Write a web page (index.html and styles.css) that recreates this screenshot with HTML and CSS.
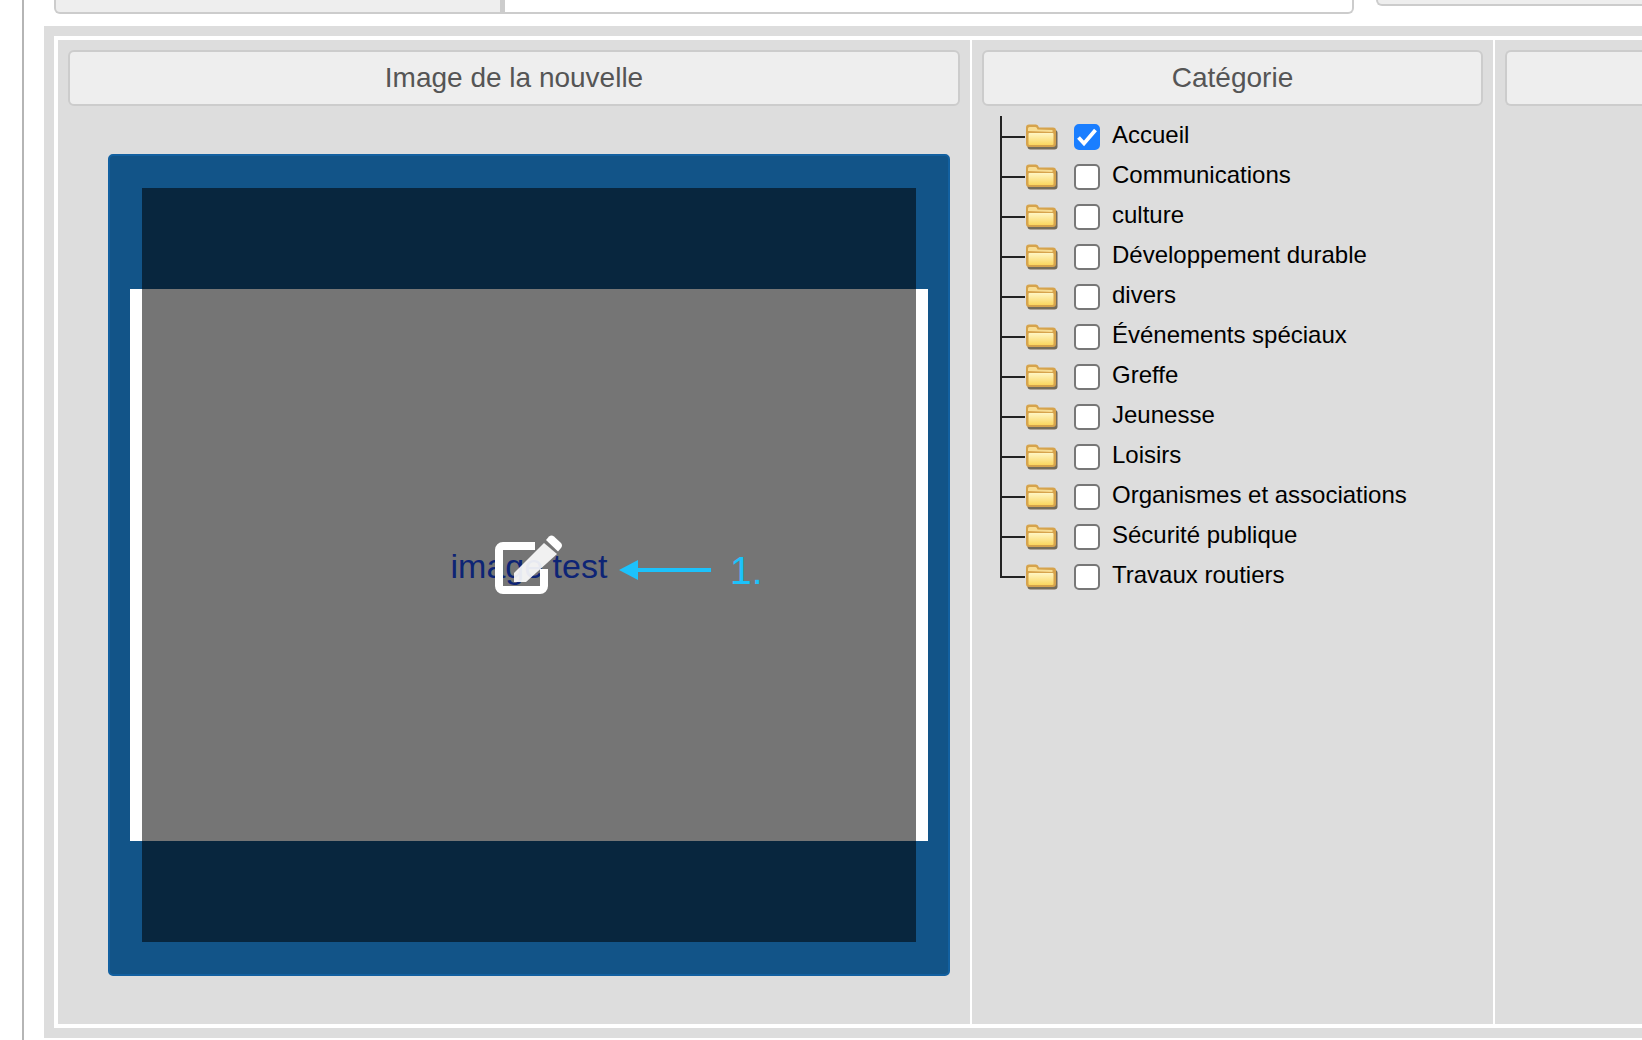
FILE: index.html
```html
<!DOCTYPE html>
<html lang="fr">
<head>
<meta charset="utf-8">
<title>Image de la nouvelle</title>
<link rel="stylesheet" href="styles.css">
</head>
<body>
<svg class="defs" width="0" height="0" aria-hidden="true">
  <defs>
    <linearGradient id="folderFill" x1="0" y1="0" x2="0" y2="1">
      <stop offset="0" stop-color="#fff6c4"/>
      <stop offset="1" stop-color="#fbd65e"/>
    </linearGradient>
    <filter id="folderBlur" x="-10%" y="-10%" width="120%" height="120%">
      <feGaussianBlur stdDeviation=".7"/>
    </filter>
    <symbol id="folder" viewBox="0 0 33 26">
      <rect x="2.500" y="6" width="30" height="19.500" rx="3" fill="#4a3a20" opacity=".7" filter="url(#folderBlur)"/>
      <path d="M1 20V3.500q0-3 3-3h7q2 0 3 3h14q3 0 3 3V20q0 3-3 3H4q-3 0-3-3z" fill="#d6a34c"/>
      <path d="M3 7V4.500q0-1.500 1.500-1.500h6q1.500 0 2 2.500l15 .5v2z" fill="#f7dd94"/>
      <rect x="3.500" y="9" width="25" height="12" rx="1" fill="url(#folderFill)"/>
    </symbol>
  </defs>
</svg>
<div class="page">
  <div class="top">
    <div class="tab"></div>
    <div class="tab-body"></div>
    <div class="tab-side"></div>
  </div>
  <div class="panel">
    <div class="inner">
      <section class="col col-image">
        <h2 class="head">Image de la nouvelle</h2>
        <div class="image-box">
          <div class="picture"><span class="picture-text">image test</span></div>
          <div class="overlay"></div>
          <svg class="edit-icon" width="72" height="64" viewBox="0 0 72 64" aria-hidden="true">
            <path d="M42 13H10a4 4 0 0 0-4 4v36a4 4 0 0 0 4 4h37a4 4 0 0 0 4-4V36" fill="none" stroke="#fff" stroke-width="8"/>
            <path d="M21 40L51 10l13 11-31 28H21z" fill="#fff" fill-opacity=".9"/>
            <path d="M53 7l3-3.500q2.500-2 5 0l7 6.500q2 2.500 0 5l-3 3.500z" fill="#fff"/>
          </svg>
          <div class="note">
            <svg class="arrow" width="92" height="20" viewBox="0 0 92 20" aria-hidden="true">
              <path d="M0 10L19 0v8h73v4H19v8z" fill="#1cc2fb"/>
            </svg>
            <span class="note-text">1.</span>
          </div>
        </div>
      </section>
      <section class="col col-cat">
        <h2 class="head">Catégorie</h2>
        <ul class="tree">
          <li class="row"><span class="branch"></span><svg class="folder"><use href="#folder"/></svg><span class="check check-on"><svg width="26" height="26" viewBox="0 0 26 26" aria-hidden="true"><path d="M4.500 13.500l5.500 6L21.500 6" fill="none" stroke="#fff" stroke-width="3.800"/></svg></span><span class="label">Accueil</span></li>
          <li class="row"><span class="branch"></span><svg class="folder"><use href="#folder"/></svg><span class="check"></span><span class="label">Communications</span></li>
          <li class="row"><span class="branch"></span><svg class="folder"><use href="#folder"/></svg><span class="check"></span><span class="label">culture</span></li>
          <li class="row"><span class="branch"></span><svg class="folder"><use href="#folder"/></svg><span class="check"></span><span class="label">Développement durable</span></li>
          <li class="row"><span class="branch"></span><svg class="folder"><use href="#folder"/></svg><span class="check"></span><span class="label">divers</span></li>
          <li class="row"><span class="branch"></span><svg class="folder"><use href="#folder"/></svg><span class="check"></span><span class="label">Événements spéciaux</span></li>
          <li class="row"><span class="branch"></span><svg class="folder"><use href="#folder"/></svg><span class="check"></span><span class="label">Greffe</span></li>
          <li class="row"><span class="branch"></span><svg class="folder"><use href="#folder"/></svg><span class="check"></span><span class="label">Jeunesse</span></li>
          <li class="row"><span class="branch"></span><svg class="folder"><use href="#folder"/></svg><span class="check"></span><span class="label">Loisirs</span></li>
          <li class="row"><span class="branch"></span><svg class="folder"><use href="#folder"/></svg><span class="check"></span><span class="label">Organismes et associations</span></li>
          <li class="row"><span class="branch"></span><svg class="folder"><use href="#folder"/></svg><span class="check"></span><span class="label">Sécurité publique</span></li>
          <li class="row row-last"><span class="branch"></span><svg class="folder"><use href="#folder"/></svg><span class="check"></span><span class="label">Travaux routiers</span></li>
        </ul>
      </section>
      <section class="col col-rest">
        <h2 class="head"></h2>
      </section>
    </div>
  </div>
</div>
</body>
</html>
```
FILE: styles.css
```css
* { box-sizing: border-box; }
html, body { margin: 0; padding: 0; }
body {
  width: 1642px;
  height: 1040px;
  overflow: hidden;
  background: #fff;
  font-family: "Liberation Sans", Arial, sans-serif;
}
.defs { position: absolute; }
.page {
  width: 1620px;
  height: 1040px;
  margin-left: 22px;
  padding-left: 20px;
  border-left: 2px solid #b5b5b5;
}
.top {
  display: flex;
  height: 26px;
  margin-left: 10px;
  align-items: flex-start;
}
.tab {
  width: 448px;
  height: 14px;
  background: #eee;
  border: 2px solid #ccc;
  border-top: 0;
  border-radius: 0 0 0 6px;
}
.tab-body {
  width: 852px;
  height: 14px;
  background: #fff;
  border: 2px solid #ccc;
  border-top: 0;
  border-left-width: 3px;
  border-radius: 0 0 6px 0;
}
.tab-side {
  flex: 1;
  height: 6px;
  margin-left: 22px;
  background: #eee;
  border: 2px solid #ccc;
  border-top: 0;
  border-right: 0;
  border-radius: 0 0 0 6px;
}
.panel {
  height: 1012px;
  padding: 10px 0 10px 10px;
  background: #ddd;
}
.inner {
  display: flex;
  height: 100%;
  border: solid #fff;
  border-width: 4px 0 4px 4px;
  background: #ddd;
}
.col {
  flex: none;
  padding: 10px 10px 0;
  border-right: 2px solid #fff;
}
.col-image { width: 914px; }
.col-cat { width: 523px; }
.col-rest { flex: 1; border-right: 0; padding-right: 0; }
.head {
  height: 56px;
  margin: 0;
  background: #eee;
  border: 2px solid #ccc;
  border-radius: 6px;
  color: #555;
  font-size: 28px;
  font-weight: 400;
  line-height: 52px;
  text-align: center;
}
.col-image .head { width: 892px; }
.col-cat .head { width: 501px; }
.col-rest .head { margin-right: -10px; border-right: 0; border-radius: 6px 0 0 6px; }
.image-box {
  position: relative;
  display: flex;
  align-items: center;
  justify-content: center;
  width: 842px;
  height: 822px;
  margin: 48px 0 0 40px;
  background: #125488;
  border: 2px solid #1260a0;
  border-radius: 5px;
}
.picture {
  display: flex;
  align-items: center;
  justify-content: center;
  width: 798px;
  height: 552px;
  background: #fff;
}
.picture-text {
  padding-top: 2px;
  color: #1e50ff;
  font-size: 34px;
}
.overlay {
  position: absolute;
  left: 32px;
  top: 32px;
  width: 774px;
  height: 754px;
  background: rgba(0, 0, 0, .54);
}
.edit-icon {
  position: absolute;
  left: 383px;
  top: 377px;
}
.note {
  position: absolute;
  left: 509px;
  top: 393px;
  display: flex;
  align-items: center;
  gap: 19px;
}
.arrow { display: block; }
.note-text {
  margin-top: 2px;
  color: #1cc2fb;
  font-size: 39px;
  line-height: 40px;
}
.tree {
  margin: 11px 0 0 18px;
  padding: 0;
  list-style: none;
}
.row {
  display: flex;
  align-items: center;
  height: 40px;
}
.branch {
  align-self: flex-start;
  width: 25px;
  height: 40px;
  border-left: 2px solid #222;
  background: linear-gradient(#222, #222) 0 19px / 100% 2px no-repeat;
}
.row:first-child .branch {
  height: 41px;
  margin-top: -1px;
  background-position: 0 20px;
}
.row-last .branch { height: 21px; }
.folder {
  flex: none;
  width: 33px;
  height: 26px;
}
.check {
  flex: none;
  width: 26px;
  height: 26px;
  margin-left: 16px;
  background: #fff;
  border: 2px solid #777;
  border-radius: 5px;
}
.check svg { display: block; margin: -2px; }
.check-on { background: #1a7eff; border-color: #1a7eff; }
.label {
  margin: 0 0 4px 12px;
  color: #000;
  font-size: 24px;
  line-height: 28px;
}
```
